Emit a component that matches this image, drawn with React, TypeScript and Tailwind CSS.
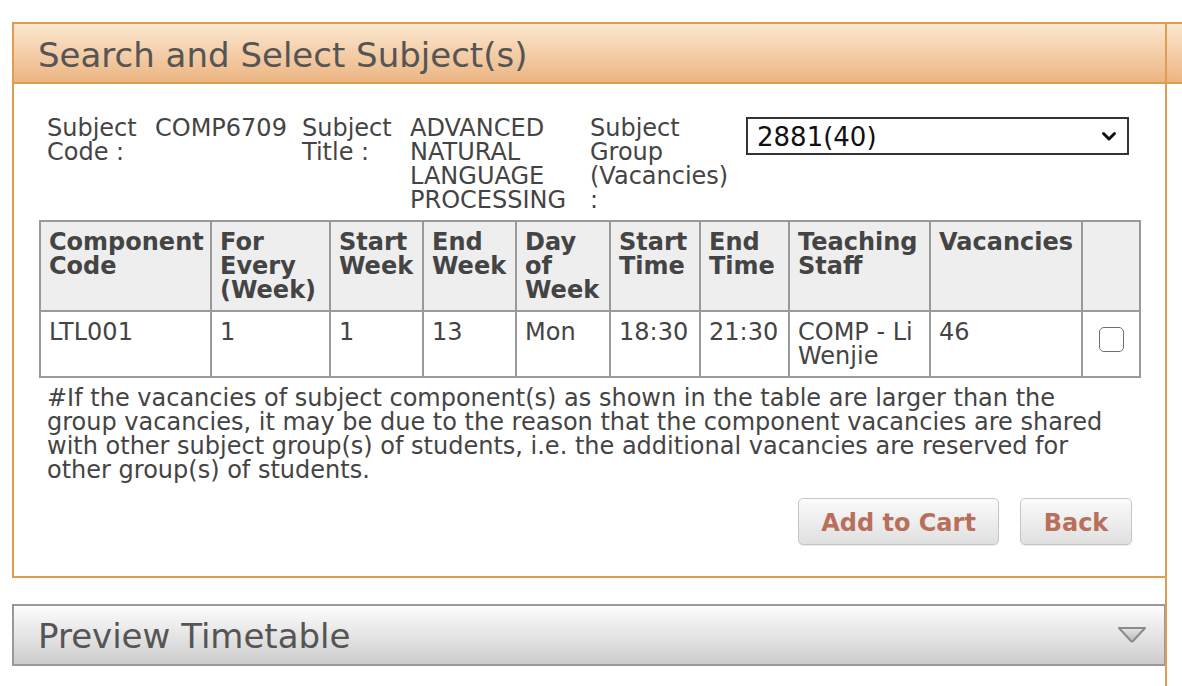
import React from "react";

const cols = [171, 119, 93, 93, 94, 90, 89, 141, 152, 58];

export default function App() {
  const th = "border-2 border-[#9a9a9a] bg-[#eeeeee] px-[8px] pt-[8px] pb-[8px] align-top text-left font-bold leading-[24px]";
  const td = "border-2 border-[#9a9a9a] bg-white px-[8px] pt-[8px] pb-[8px] align-top text-left leading-[24px]";
  return (
    <div className="relative w-[1182px] h-[686px] overflow-hidden bg-white font-['DejaVu_Sans',sans-serif] text-[#444444]">
      <div className="pt-[22px]">
        <div className="ml-[12px] w-[1154px] border-l-2 border-b-2 border-[#df9d52]">
          <div className="-mr-[20px] h-[62px] border-y-2 border-[#df9d52] bg-gradient-to-b from-[#fbe7cf] to-[#ecb582] pl-[24px] pt-[4px] flex items-center text-[34px] text-[#555555]">
            Search and Select Subject(s)
          </div>
          <div className="pl-[25px] pr-[27px] pt-[32px] pb-[31px] text-[24px] leading-[24px]">
            <div className="flex items-start">
              <div className="w-[108px] pl-[8px]">Subject Code :</div>
              <div className="w-[147px] pl-[8px]">COMP6709</div>
              <div className="w-[108px] pl-[8px]">Subject Title :</div>
              <div className="w-[180px] pl-[8px]">ADVANCED NATURAL LANGUAGE PROCESSING</div>
              <div className="w-[156px] pl-[8px]">Subject Group (Vacancies) :</div>
              <div className="pl-[8px] pt-[1px]">
                <div className="w-[383px] h-[38px] border-2 border-[#333333] bg-white flex items-center justify-between pl-[9px] pr-[10px] text-[#111111]">
                  <span className="pt-[2px] text-[26px]">2881(40)</span>
                  <svg width="16" height="11" viewBox="0 0 16 11">
                    <path d="M2.5 2.5 L8 8 L13.5 2.5" fill="none" stroke="#111" strokeWidth="3" strokeLinecap="round" strokeLinejoin="round" />
                  </svg>
                </div>
              </div>
            </div>

            <table className="mt-[8px] w-[1100px] table-fixed border-collapse">
              <colgroup>
                {cols.map((w, i) => (
                  <col key={i} style={{ width: w }} />
                ))}
              </colgroup>
              <thead>
                <tr>
                  <th className={th}>Component Code</th>
                  <th className={th}>For Every (Week)</th>
                  <th className={th}>Start Week</th>
                  <th className={th}>End Week</th>
                  <th className={th}>Day of Week</th>
                  <th className={th}>Start Time</th>
                  <th className={th}>End Time</th>
                  <th className={th}>Teaching Staff</th>
                  <th className={th}>Vacancies</th>
                  <th className={th}></th>
                </tr>
              </thead>
              <tbody>
                <tr>
                  <td className={td}>LTL001</td>
                  <td className={td}>1</td>
                  <td className={td}>1</td>
                  <td className={td}>13</td>
                  <td className={td}>Mon</td>
                  <td className={td}>18:30</td>
                  <td className={td}>21:30</td>
                  <td className={td}>COMP - Li Wenjie</td>
                  <td className={td}>46</td>
                  <td className="border-2 border-[#9a9a9a] bg-white align-middle">
                    <div className="flex justify-center -mt-[9px]">
                      <div className="w-[25px] h-[25px] rounded-[5px] border-[1.5px] border-[#6f6f6f] bg-white" />
                    </div>
                  </td>
                </tr>
              </tbody>
            </table>

            <div className="mt-[8px] pl-[8px] whitespace-nowrap">
              #If the vacancies of subject component(s) as shown in the table are larger than the
              <br />
              group vacancies, it may be due to the reason that the component vacancies are shared
              <br />
              with other subject group(s) of students, i.e. the additional vacancies are reserved for
              <br />
              other group(s) of students.
            </div>

            <div className="mt-[16px] flex justify-end gap-[21px] pr-[7px]">
              <button className="w-[201px] h-[47px] pt-[3px] rounded-[5px] border-[1.5px] border-[#c6c6c6] bg-gradient-to-b from-[#fbfbfb] to-[#e0e0e0] font-bold text-[24px] text-[#b86f5b] shadow-[0_1px_1px_rgba(0,0,0,0.08)]">
                Add to Cart
              </button>
              <button className="w-[112px] h-[47px] pt-[3px] rounded-[5px] border-[1.5px] border-[#c6c6c6] bg-gradient-to-b from-[#fbfbfb] to-[#e0e0e0] font-bold text-[24px] text-[#b86f5b] shadow-[0_1px_1px_rgba(0,0,0,0.08)]">
                Back
              </button>
            </div>
          </div>
        </div>

        <div className="mt-[26px] ml-[12px] w-[1154px] h-[62px] border-2 border-[#999999] bg-gradient-to-b from-[#fdfdfd] to-[#cdcdcd] flex items-center justify-between pl-[24px] pr-[16px]">
          <span className="pt-[3px] text-[34px] text-[#555555]">Preview Timetable</span>
          <svg width="32" height="20" viewBox="0 0 32 20">
            <defs>
              <linearGradient id="tri" x1="0" y1="0" x2="0" y2="1">
                <stop offset="0" stopColor="#e6e6e6" />
                <stop offset="1" stopColor="#b9b9b9" />
              </linearGradient>
            </defs>
            <path d="M3 3 L29 3 L17 16 Q16 17 15 16 Z" fill="url(#tri)" stroke="#8a8a8a" strokeWidth="2" strokeLinejoin="round" />
          </svg>
        </div>
      </div>
      <div className="absolute left-[1165px] top-[22px] bottom-0 w-[2px] bg-[#df9d52]" />
    </div>
  );
}
